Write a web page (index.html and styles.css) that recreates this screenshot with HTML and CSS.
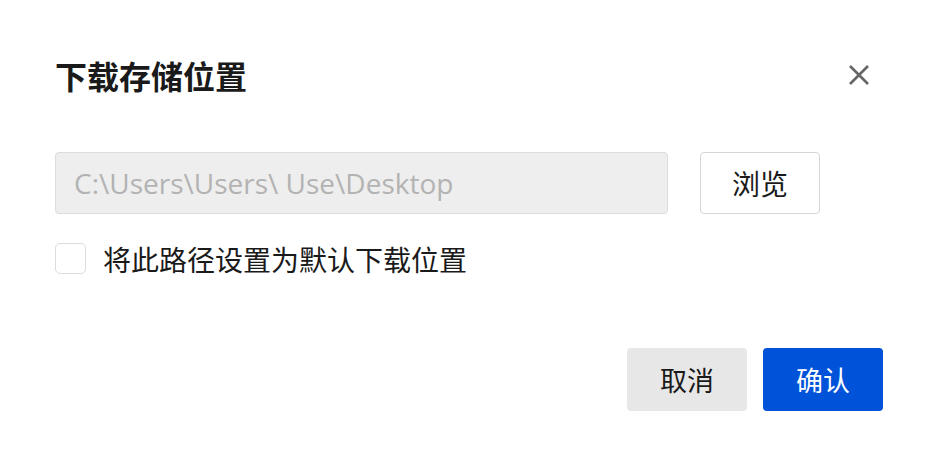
FILE: index.html
```html
<!DOCTYPE html>
<html lang="zh-CN">

  <head>
    <meta charset="UTF-8">
    <meta name="viewport" content="width=device-width, initial-scale=1.0">
    <title>下载存储位置</title>
    <link rel="stylesheet" href="styles.css">
  </head>

  <body>
    <div class="dialog">
      <div class="header">
        <h2 class="title">下载存储位置</h2>
        <button class="close" aria-label="关闭">
          <svg width="22" height="22" viewBox="0 0 22 22">
            <path d="M2 2 L20 20 M20 2 L2 20" stroke="#666" stroke-width="2.6" fill="none" />
          </svg>
        </button>
      </div>

      <div class="pathRow">
        <div class="pathInput">C:\Users\Users\ Use\Desktop</div>
        <button class="browse">浏览</button>
      </div>

      <label class="check">
        <span class="box"></span>
        <span class="checkText">将此路径设置为默认下载位置</span>
      </label>

      <div class="footer">
        <button class="btn cancel">取消</button>
        <button class="btn confirm">确认</button>
      </div>
    </div>
  </body>

</html>
```

FILE: styles.css
```css
body {
  margin: 0;
  background-color: #fff;
  font-family: "Open Sans", "Noto Sans CJK SC", sans-serif;
  color: #1a1a1a;
}

.dialog {
  padding: 55px 58px 0 55px;
}

.header {
  display: flex;
  align-items: center;
  justify-content: space-between;
  height: 44px;
}

.title {
  margin: -5px 0 0 0;
  font-size: 32px;
  font-weight: bold;
  color: #1a1a1a;
}

.close {
  width: 22px;
  height: 22px;
  padding: 0;
  margin-right: 13px;
  margin-top: -4px;
  border: none;
  background: none;
  cursor: pointer;
}

.pathRow {
  display: flex;
  gap: 32px;
  margin-top: 53px;
}

.pathInput {
  box-sizing: border-box;
  width: 613px;
  height: 62px;
  padding: 0 18px;
  display: flex;
  align-items: center;
  background-color: #eeeeee;
  border: 1px solid #dcdcdc;
  border-radius: 4px;
  font-size: 28px;
  color: #b3b3b3;
  white-space: nowrap;
  overflow: hidden;
}

.browse {
  box-sizing: border-box;
  width: 120px;
  height: 62px;
  background-color: #fff;
  border: 1px solid #d6d6d6;
  border-radius: 4px;
  font-family: inherit;
  font-size: 28px;
  color: #1a1a1a;
  cursor: pointer;
}

.check {
  display: flex;
  align-items: center;
  gap: 17px;
  height: 31px;
  margin-top: 29px;
  cursor: pointer;
}

.box {
  box-sizing: border-box;
  width: 31px;
  height: 31px;
  border: 1px solid #dcdcdc;
  border-radius: 5px;
}

.checkText {
  font-size: 28px;
  color: #1a1a1a;
}

.footer {
  display: flex;
  justify-content: flex-end;
  gap: 16px;
  margin-top: 74px;
}

.btn {
  width: 120px;
  height: 63px;
  border: none;
  border-radius: 4px;
  font-family: inherit;
  font-size: 27px;
  cursor: pointer;
}

.cancel {
  background-color: #e7e7e7;
  color: #1a1a1a;
}

.confirm {
  background-color: #0052d9;
  color: #fff;
}
```
